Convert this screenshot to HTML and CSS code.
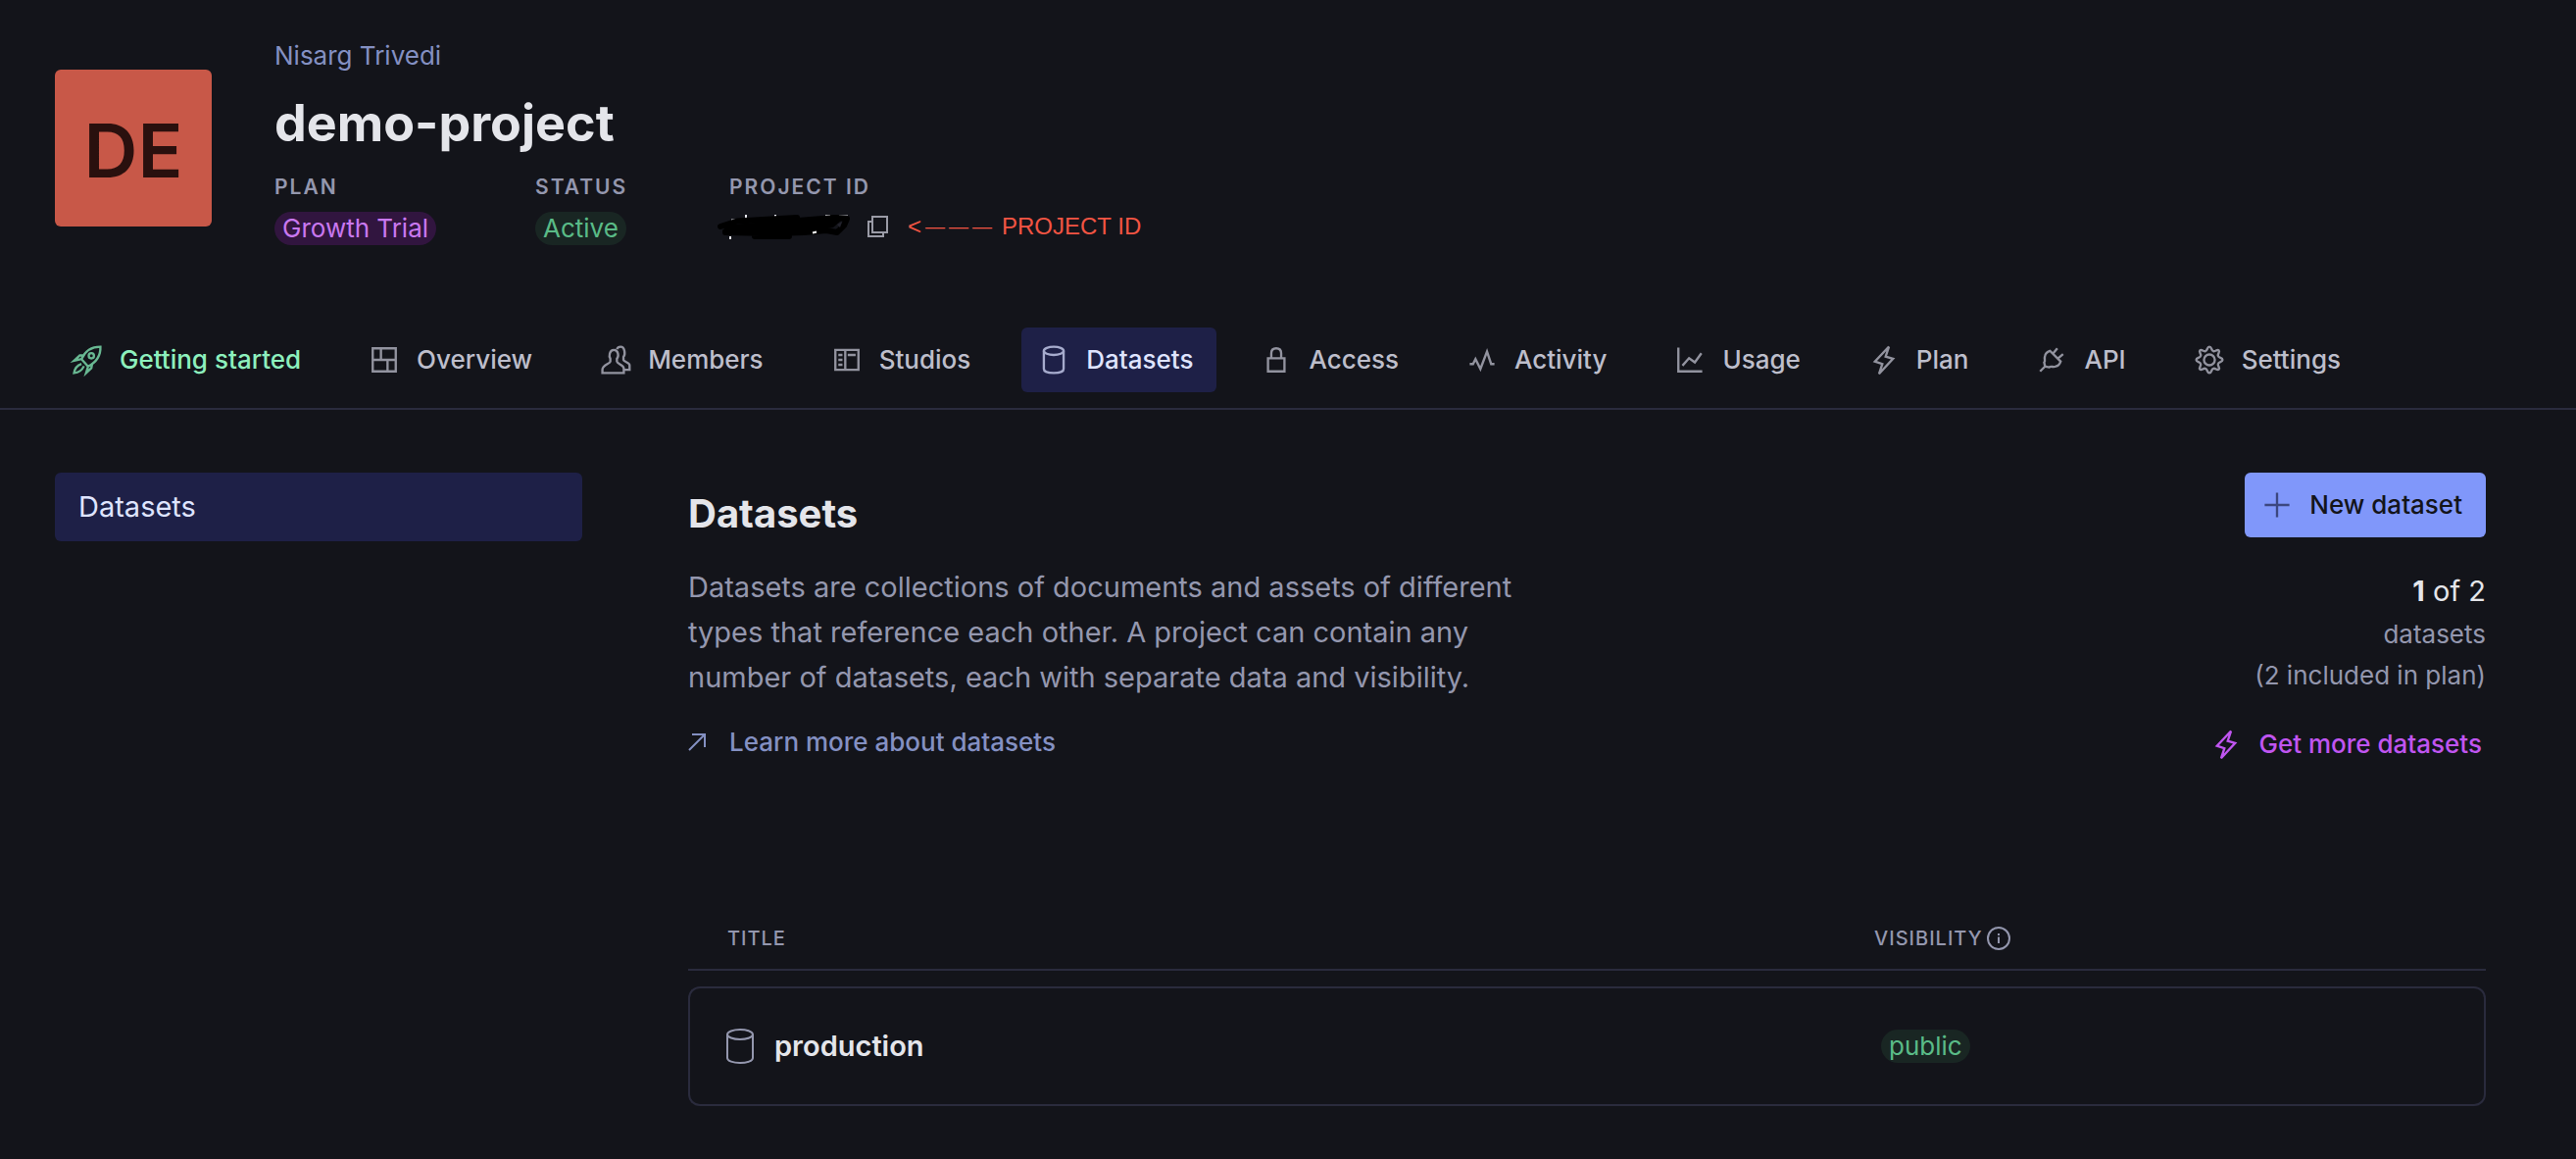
FILE: index.html
```html
<!DOCTYPE html>
<html lang="en">
<head>
<meta charset="utf-8">
<title>demo-project – Datasets</title>
<meta name="viewport" content="width=device-width, initial-scale=1">
<link rel="stylesheet" href="styles.css">
</head>
<body>
<header class="project">
  <div class="avatar" aria-hidden="true">DE</div>
  <div class="project-info">
    <a class="org" href="#">Nisarg Trivedi</a>
    <h1 class="project-name">demo-project</h1>
    <dl class="facts">
      <div class="fact fact-plan"><dt>Plan</dt><dd><span class="pill pill-purple">Growth Trial</span></dd></div>
      <div class="fact fact-status"><dt>Status</dt><dd><span class="pill pill-green">Active</span></dd></div>
      <div class="fact"><dt>Project ID</dt>
        <dd class="project-id">
          <svg class="scribble" viewBox="0 -2 140 30" aria-label="hidden"><path d="M16 6.500h4M31 1v4M61 1v4M112 2h5M126 2.500h9M15 23v3" stroke="#e8e8ee" stroke-width="2" fill="none"/><path d="M5 13 22 7.500 48 6 83 4M10 18 40 13 84 7 122 4 134 5 131 12 124 19 113 17 90 19 60 20 10 19M40 23H75M12 15 60 11 115 9" stroke="#000" stroke-width="6" stroke-linecap="round" stroke-linejoin="round" fill="none"/><path d="M14 11 80 7 128 7 120 14 80 20 20 18Z" fill="#000"/><path d="M124 11l5-3-2 6z" fill="#22222c"/><path d="M99 19.500l4-1" stroke="#fff" stroke-width="2"/></svg>
          <button class="copy" type="button" aria-label="Copy project ID"><svg viewBox="0 0 24 24"><path d="M6 2H21V18H6ZM6 7H2V22H17V18"/></svg></button>
          <span class="note"><span class="note-arrow">&lt;<span class="dash">—</span><span class="dash">—</span><span class="dash">—</span></span> PROJECT ID</span>
        </dd></div>
    </dl>
  </div>
</header>

<nav class="tabs" aria-label="Project">
  <a class="tab tab-start" href="#"><svg class="icon" viewBox="0 0 25 25"><path d="M9 12C11 7.500 14.500 4.500 20.500 4.500 20.700 10 18 14 13 16.500ZM9 12 13 16.500M10.500 9.700 8 9.800 4.500 13 9 12M15.500 14.800 15 17.500 11.800 20.500 13 16.500M9 15C6.500 15.800 5 17.500 4.500 20.500 7.500 20.200 9.500 18.500 10.500 16.300"/><circle cx="15" cy="10" r="1.600"/></svg>Getting started</a>
  <a class="tab" href="#"><svg class="icon" viewBox="0 0 25 25"><path d="M5.500 5.500H19.500V19.500H5.500ZM5.500 12.500H19.500M10.500 5.500V12.500M14.500 12.500V19.500"/></svg>Overview</a>
  <a class="tab" href="#"><svg class="icon" viewBox="0 0 25 25"><path d="M17.500 18.500H21V15.700C21 14 17.500 13.800 17.300 12.500V10.700C18.500 9.500 18.300 4.500 15.500 4.500 14.500 4.500 13.700 5 13.300 6M4.500 20.500H17.500V17.700C17.500 15.500 13.500 15 13.300 13.500V11.800C14.600 10.500 14.300 6.500 11.500 6.500 8.700 6.500 8.300 10.500 9.300 11.800V13.500C9 15 4.500 15.500 4.500 18.500Z"/></svg>Members</a>
  <a class="tab" href="#"><svg class="icon" viewBox="0 0 25 25"><path d="M5.500 6.500H19.500V18.500H5.500ZM11.500 6.500V18.500M7.300 9.500H9.800M7.300 12.500H9.800M7.300 15.500H9.800M13 9.500H17.800"/></svg>Studios</a>
  <a class="tab tab-current" href="#" aria-current="page"><svg class="icon" viewBox="0 0 25 25"><path d="M6.500 7V18C6.500 19.500 9 20.500 12.500 20.500S18.500 19.500 18.500 18V7"/><ellipse cx="12.500" cy="7" rx="6" ry="2.500"/></svg>Datasets</a>
  <a class="tab" href="#"><svg class="icon" viewBox="0 0 25 25"><path d="M7.500 11.500H17.500V19.500H7.500ZM9.500 11.500V8.500C9.500 6.700 10.700 5.500 12.500 5.500S15.500 6.700 15.500 8.500V11.500"/></svg>Access</a>
  <a class="tab" href="#"><svg class="icon" viewBox="0 0 25 25"><path d="M5 15H7L8.500 12 11.500 18 15.500 7.500 18 15H20"/></svg>Activity</a>
  <a class="tab" href="#"><svg class="icon" viewBox="0 0 25 25"><path d="M5.500 5V19.500H20M8 16 12 11.500 15.500 14 19.500 8.500"/></svg>Usage</a>
  <a class="tab" href="#"><svg class="icon" viewBox="0 0 25 25"><path d="M15.500 4.500 7 13.500 11.500 15 9.500 21 18 11.800 13.500 10.500Z"/></svg>Plan</a>
  <a class="tab" href="#"><svg class="icon" viewBox="0 0 25 25"><path d="M5.500 19.500 8.500 16.500M16 5.500 13.500 8.500M19.500 9 16.500 11.500M11.500 7 18 13.500C17.500 15 16.500 16.200 15 16.500 13.500 17.200 12 16 11 17L8.500 16.500 8 14C9 13 7.800 12 8.500 10 8.800 8.500 10 7.500 11.500 7Z"/></svg>API</a>
  <a class="tab" href="#"><svg class="icon" viewBox="0 0 25 25"><path d="M12.500 4.500C14 4.500 13.500 6.800 14.900 7.200 16.200 7.700 17.200 5.800 18.200 6.800S17.300 8.800 17.800 10.100C18.200 11.500 20.500 11 20.500 12.500S18.200 13.500 17.800 14.900C17.300 16.200 19.200 17.200 18.200 18.200S16.200 17.300 14.900 17.800C13.500 18.200 14 20.500 12.500 20.500S11.500 18.200 10.100 17.800C8.800 17.300 7.800 19.200 6.800 18.200S7.700 16.200 7.200 14.900C6.800 13.500 4.500 14 4.500 12.500S6.800 11.500 7.200 10.100C7.700 8.800 5.800 7.800 6.800 6.800S8.800 7.700 10.100 7.200C11.500 6.800 11 4.500 12.500 4.500Z"/><circle cx="12.500" cy="12.500" r="3.300"/></svg>Settings</a>
</nav>

<div class="layout">
  <aside class="sidebar"><a class="side-link" href="#" aria-current="page">Datasets</a></aside>
  <main class="content">
    <section class="intro">
      <div class="intro-text">
        <h2 class="heading">Datasets</h2>
        <p class="lead">Datasets are collections of documents and assets of different types that reference each other. A project can contain any number of datasets, each with separate data and visibility.</p>
        <a class="learn" href="#"><svg class="arrow" viewBox="0 0 24 24"><path d="M1 20 17 4M4 4H17V17"/></svg>Learn more about datasets</a>
      </div>
      <div class="quota">
        <button class="new" type="button"><svg class="icon" viewBox="0 0 25 25"><path d="M12.500 5V20M5 12.500H20"/></svg>New dataset</button>
        <p class="count"><strong>1</strong> of 2</p>
        <p class="count-note">datasets</p>
        <p class="count-note">(2 included in plan)</p>
        <a class="more" href="#"><svg class="icon" viewBox="0 0 25 25"><path d="M15.500 4.500 7 13.500 11.500 15 9.500 21 18 11.800 13.500 10.500Z"/></svg>Get more datasets</a>
      </div>
    </section>
    <table class="datasets">
      <thead>
        <tr><th scope="col">Title</th><th scope="col" class="col-visibility"><span class="th-info">Visibility<svg class="info" viewBox="0 0 24 24"><circle cx="12" cy="12" r="11"/><path d="M12 10.500V17M12 7V9"/></svg></span></th></tr>
      </thead>
      <tbody>
        <tr><td><span class="dataset"><svg class="icon icon-large" viewBox="0 0 25 25"><path d="M6 6.500V18.500C6 20 9 21 12.500 21S19 20 19 18.500V6.500"/><ellipse cx="12.500" cy="6.500" rx="6.500" ry="2.500"/></svg>production</span></td><td class="col-visibility"><span class="pill pill-green">public</span></td></tr>
      </tbody>
    </table>
  </main>
</div>
</body>
</html>
```
FILE: styles.css
```css
* { box-sizing: border-box; }

body {
  margin: 0;
  background: #13141a;
  color: #e4e5ea;
  font-family: Inter, "Liberation Sans", sans-serif;
  font-size: 26px;
  line-height: 34px;
}

h1, h2, p, dl, dd { margin: 0; }
a { color: inherit; text-decoration: none; }
button { font: inherit; border: 0; cursor: pointer; }
svg { fill: none; stroke: currentColor; flex: none; display: block; }

.icon { width: 42px; height: 42px; stroke-width: 1.4; }
.icon-large { width: 50px; height: 50px; }

.pill {
  display: inline-block;
  padding: 0 8px;
  border-radius: 17px;
  line-height: 34px;
}
.pill-purple { background: #31153f; color: #c978f0; }
.pill-green { background: #192623; color: #5abb87; }

/* Project header */
.project {
  display: flex;
  gap: 64px;
  padding: 40px 56px 84px;
}
.avatar {
  width: 160px;
  height: 160px;
  margin-top: 31px;
  padding-top: 2px;
  border-radius: 6px;
  background: #c85848;
  color: #2a100e;
  font-size: 76px;
  font-weight: 600;
  line-height: 160px;
  text-align: center;
}
.org { display: block; color: #8490c2; }
.project-name {
  margin-top: 20px;
  font-size: 52px;
  line-height: 64px;
  font-weight: 700;
}
.facts { display: flex; height: 74px; margin-top: 18px; }
.fact-plan { width: 266px; }
.fact-status { width: 198px; }
.fact dt {
  margin-bottom: 10px;
  color: #9497ae;
  font-size: 21px;
  line-height: 30px;
  font-weight: 600;
  letter-spacing: 2px;
  text-transform: uppercase;
}
.project-id { display: flex; align-items: center; height: 30px; }
.scribble { width: 140px; height: 30px; margin-left: -14px; stroke: none; }
.copy {
  margin-left: 14px;
  padding: 0;
  background: none;
  color: #9a9ba6;
}
.copy svg { width: 24px; height: 26px; stroke-width: 2; }
.note {
  display: flex;
  gap: 10px;
  margin-left: 18px;
  color: #f25443;
  font-family: "Liberation Sans", sans-serif;
  font-size: 24px;
}
.note-arrow { display: flex; gap: 4px; }
.dash { font-size: 20px; }

/* Tabs */
.tabs {
  display: flex;
  gap: 28px;
  padding: 0 56px 16px;
  border-bottom: 2px solid #2a2b3d;
}
.tab {
  display: flex;
  align-items: center;
  gap: 12px;
  height: 66px;
  padding: 0 24px 0 12px;
  border-radius: 6px;
  color: #bdbecb;
  font-weight: 500;
  white-space: nowrap;
}
.tab .icon { color: #92939f; }
.tab-start { color: #8df0bd; }
.tab-start .icon { color: #68b892; }
.tab-current { background: #1e2047; color: #dfe4ff; }
.tab-current .icon { color: #a6abcd; }

/* Body */
.layout {
  display: grid;
  grid-template-columns: 538px 1fr;
  gap: 108px;
  padding: 64px 92px 52px 56px;
}
.side-link {
  display: block;
  padding: 0 24px;
  border-radius: 6px;
  background: #1e2047;
  color: #dfe4ff;
  font-size: 29px;
  line-height: 70px;
}
.intro { display: flex; justify-content: space-between; }
.heading {
  margin-top: 16px;
  font-size: 40px;
  line-height: 52px;
  font-weight: 700;
}
.lead {
  max-width: 860px;
  margin-top: 26px;
  color: #9497ae;
  font-size: 29px;
  line-height: 46px;
}
.learn {
  display: flex;
  align-items: center;
  gap: 18px;
  margin-top: 26px;
  color: #8490c2;
  font-weight: 500;
}
.arrow { width: 24px; height: 24px; stroke-width: 2; }
.quota {
  display: flex;
  flex-direction: column;
  align-items: flex-end;
  text-align: right;
  white-space: nowrap;
}
.new {
  display: flex;
  align-items: center;
  gap: 12px;
  height: 66px;
  padding: 0 24px 0 12px;
  border-radius: 6px;
  background: #8097fa;
  color: #13141a;
  font-weight: 500;
}
.new .icon { color: #3c477f; }
.count { margin-top: 32px; font-size: 29px; line-height: 46px; }
.count-note { color: #9497ae; line-height: 42px; }
.more {
  display: flex;
  align-items: center;
  gap: 12px;
  margin-top: 28px;
  padding-right: 4px;
  color: #c055f0;
  font-weight: 500;
  line-height: 42px;
}

/* Dataset table */
.datasets {
  width: 100%;
  margin-top: 162px;
  border-collapse: separate;
  border-spacing: 0;
}
.datasets th {
  padding: 0 0 16px 40px;
  border-bottom: 2px solid #2a2b3d;
  color: #9497ae;
  font-size: 20px;
  line-height: 30px;
  font-weight: 500;
  letter-spacing: 1px;
  text-align: left;
  text-transform: uppercase;
}
.datasets tbody::before { content: ""; display: block; height: 16px; }
.datasets td {
  height: 122px;
  padding: 0 0 0 26px;
  border: 2px solid #2a2b3d;
}
.datasets td:first-child { border-right: 0; border-radius: 12px 0 0 12px; }
.datasets td:last-child { border-left: 0; border-radius: 0 12px 12px 0; }
.datasets .col-visibility { width: 624px; padding-left: 0; }
.datasets td.col-visibility { padding-left: 7px; }
.th-info { display: flex; align-items: center; gap: 4px; }
.info { width: 24px; height: 24px; stroke-width: 2; }
.dataset {
  display: flex;
  align-items: center;
  gap: 10px;
  font-size: 29px;
  font-weight: 600;
}
.dataset .icon { color: #9497ae; stroke-width: 1; }
```
